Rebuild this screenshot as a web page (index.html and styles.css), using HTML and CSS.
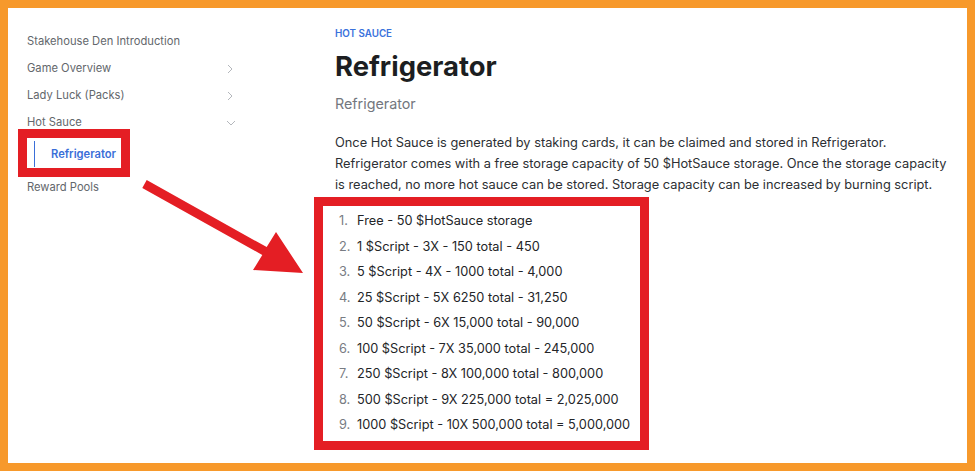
FILE: index.html
```html
<!DOCTYPE html>
<html lang="en">
<head>
    <meta charset="UTF-8">
    <meta name="viewport" content="width=device-width, initial-scale=1.0">
    <title>Refrigerator</title>
    <link rel="stylesheet" href="styles.css">
</head>
<body>

    <div class="frame">
        <nav class="sidebar">
            <a class="nav-item">Stakehouse Den Introduction</a>
            <a class="nav-item">Game Overview
                <svg class="chev" viewBox="0 0 6 10"><path d="M1 1l4 4-4 4"/></svg>
            </a>
            <a class="nav-item">Lady Luck (Packs)
                <svg class="chev" viewBox="0 0 6 10"><path d="M1 1l4 4-4 4"/></svg>
            </a>
            <a class="nav-item">Hot Sauce
                <svg class="chev down" viewBox="0 0 10 6"><path d="M1 1l4 4 4-4"/></svg>
            </a>
            <div class="mark-box">
                <a class="sub-item">Refrigerator</a>
            </div>
            <a class="nav-item">Reward Pools</a>
        </nav>

        <main class="content">
            <div class="section">HOT SAUCE</div>
            <h1>Refrigerator</h1>
            <p class="lead">Refrigerator</p>
            <p class="text">Once Hot Sauce is generated by staking cards, it can be claimed and stored in Refrigerator. Refrigerator comes with a free storage capacity of 50 $HotSauce storage. Once the storage capacity is reached, no more hot sauce can be stored. Storage capacity can be increased by burning script.</p>
            <ol class="tiers">
                <li>Free - 50 $HotSauce storage</li>
                <li>1 $Script - 3X - 150 total - 450</li>
                <li>5 $Script - 4X - 1000 total - 4,000</li>
                <li>25 $Script - 5X 6250 total - 31,250</li>
                <li>50 $Script - 6X 15,000 total - 90,000</li>
                <li>100 $Script - 7X 35,000 total - 245,000</li>
                <li>250 $Script - 8X 100,000 total - 800,000</li>
                <li>500 $Script - 9X 225,000 total = 2,025,000</li>
                <li>1000 $Script - 10X 500,000 total = 5,000,000</li>
            </ol>
        </main>

        <svg class="arrow" viewBox="130 170 185 110">
            <polygon points="146.7,180.1 266.7,247.1 276,232 303,273 253,270 262.3,254.9 142.3,187.9"/>
        </svg>
    </div>

</body>
</html>
```

FILE: styles.css
```css
body {
    margin: 0;
    background: #f7992b;
    font-family: Inter, "Noto Sans", sans-serif;
}

.frame {
    position: relative;
    display: flex;
    margin: 8px;
    height: 455px;
    background: #fff;
    overflow: hidden;
}

/* sidebar */

.sidebar {
    display: flex;
    flex-direction: column;
    width: 210px;
    padding: 20px 0 0 19px;
    flex-shrink: 0;
}

.nav-item {
    display: flex;
    justify-content: space-between;
    align-items: center;
    height: 27px;
    line-height: 27px;
    font-size: 11.2px;
    color: #63676c;
}

.chev {
    width: 6px;
    height: 10px;
    margin-right: 4px;
    fill: none;
    stroke: #b4b7bc;
    stroke-width: 1;
}

.chev.down {
    width: 10px;
    height: 6px;
    margin-right: 1px;
}

.mark-box {
    width: 94px;
    margin: -7px 0 -3px -9px;
    padding: 3px 0 1px;
    border: 9px solid #e41e24;
}

.sub-item {
    display: block;
    margin-left: 7px;
    padding-left: 16px;
    height: 26px;
    line-height: 26px;
    border-left: 1px solid #3a6fd8;
    font-size: 11.2px;
    font-weight: 600;
    color: #3a6fd8;
}

/* content */

.content {
    width: 612px;
    padding: 19px 0 0 98px;
}

.section {
    font-size: 9.8px;
    line-height: 14px;
    font-weight: 600;
    color: #3a72dc;
}

h1 {
    margin: 7px 0 0;
    font-size: 27.4px;
    line-height: 36px;
    font-weight: 700;
    color: #1c1e21;
}

.lead {
    margin: 10px 0 0;
    font-size: 14.3px;
    line-height: 20px;
    color: #73777e;
}

.text {
    margin: 18px 0 0;
    font-size: 12.8px;
    line-height: 21px;
    color: #2c2f33;
}

.tiers {
    width: 301px;
    margin: 2px 0 0 -21px;
    padding: 2px 0 3px 16px;
    border: 9px solid #e41e24;
    list-style: none;
    counter-reset: tier;
    font-size: 12.75px;
    line-height: 25.5px;
    color: #232528;
}

.tiers li {
    counter-increment: tier;
}

.tiers li::before {
    content: counter(tier) ".";
    display: inline-block;
    width: 18px;
    color: #787c83;
}

.arrow {
    position: absolute;
    left: 122px;
    top: 162px;
    width: 185px;
    height: 110px;
    fill: #e41e24;
}
```
